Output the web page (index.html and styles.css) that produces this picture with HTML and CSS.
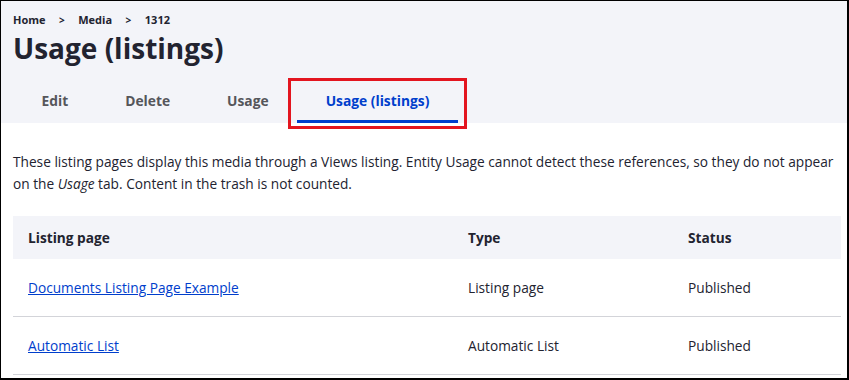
FILE: index.html
```html
<!DOCTYPE html>
<html lang="en">
<head>
    <meta charset="UTF-8">
    <meta name="viewport" content="width=device-width, initial-scale=1.0">
    <title>Usage (listings)</title>
    <link rel="stylesheet" href="styles.css">
</head>
<body>
    <div class="frame">
        <header class="page-header">
            <nav class="breadcrumb">
                <a href="#">Home</a>
                <span class="sep">&gt;</span>
                <a href="#">Media</a>
                <span class="sep">&gt;</span>
                <span>1312</span>
            </nav>
            <h1>Usage (listings)</h1>
            <ul class="tabs">
                <li><a href="#">Edit</a></li>
                <li><a href="#">Delete</a></li>
                <li><a href="#">Usage</a></li>
                <li class="active"><a href="#">Usage (listings)</a></li>
            </ul>
        </header>

        <main class="content">
            <p class="intro">These listing pages display this media through a Views listing. Entity Usage cannot detect these references, so they do not appear on the <em>Usage</em> tab. Content in the trash is not counted.</p>

            <table class="listing">
                <thead>
                    <tr>
                        <th class="col-page">Listing page</th>
                        <th class="col-type">Type</th>
                        <th>Status</th>
                    </tr>
                </thead>
                <tbody>
                    <tr>
                        <td><a href="#">Documents Listing Page Example</a></td>
                        <td>Listing page</td>
                        <td>Published</td>
                    </tr>
                    <tr>
                        <td><a href="#">Automatic List</a></td>
                        <td>Automatic List</td>
                        <td>Published</td>
                    </tr>
                </tbody>
            </table>
        </main>
    </div>
</body>
</html>
```

FILE: styles.css
```css
html, body { margin: 0; padding: 0; }
body { font-family: 'Open Sans', 'Noto Sans', sans-serif; font-size: 13.7px; color: #222330; background: #fff; }
.frame { box-sizing: border-box; height: 380px; border: 1px solid #000; border-right-width: 2px; border-bottom-width: 2px; overflow: hidden; }

.page-header { background-color: #f3f4f9; padding: 12px 12px 0; }
.breadcrumb { display: flex; align-items: center; font-size: 11px; font-weight: bold; line-height: 14px; }
.breadcrumb a { color: #222330; text-decoration: none; }
.breadcrumb .sep { margin: 0 13.5px; font-size: 10px; }
h1 { margin: 4px 0 0; font-size: 28px; line-height: 34px; font-weight: bold; }

.tabs { display: flex; list-style: none; margin: 18px 0 0; padding: 0; }
.tabs li { position: relative; }
.tabs a { display: block; padding: 9px 28.5px 10px; line-height: 18px; font-size: 13.8px; font-weight: bold; color: #55565b; text-decoration: none; border-bottom: 3px solid transparent; }
.tabs .active a { color: #003ecc; border-bottom-color: #003ecc; }
.tabs .active::after { content: ''; position: absolute; top: -5px; left: -9px; right: -9px; bottom: -6px; border: 3px solid #e3151f; }

.content { padding: 28px 6px 0 12px; }
.intro { margin: 0 -4px 21px 0; line-height: 22px; }

.listing { width: 100%; border-collapse: collapse; }
.listing th { background-color: #f3f4f9; text-align: left; font-weight: bold; height: 43px; padding: 0 15px; }
.listing td { height: 57px; padding: 0 15px; border-bottom: 1px solid #d3d4d9; }
.listing .col-page { width: 410px; }
.listing .col-type { width: 190px; }
.listing a { color: #003ecc; }
```
